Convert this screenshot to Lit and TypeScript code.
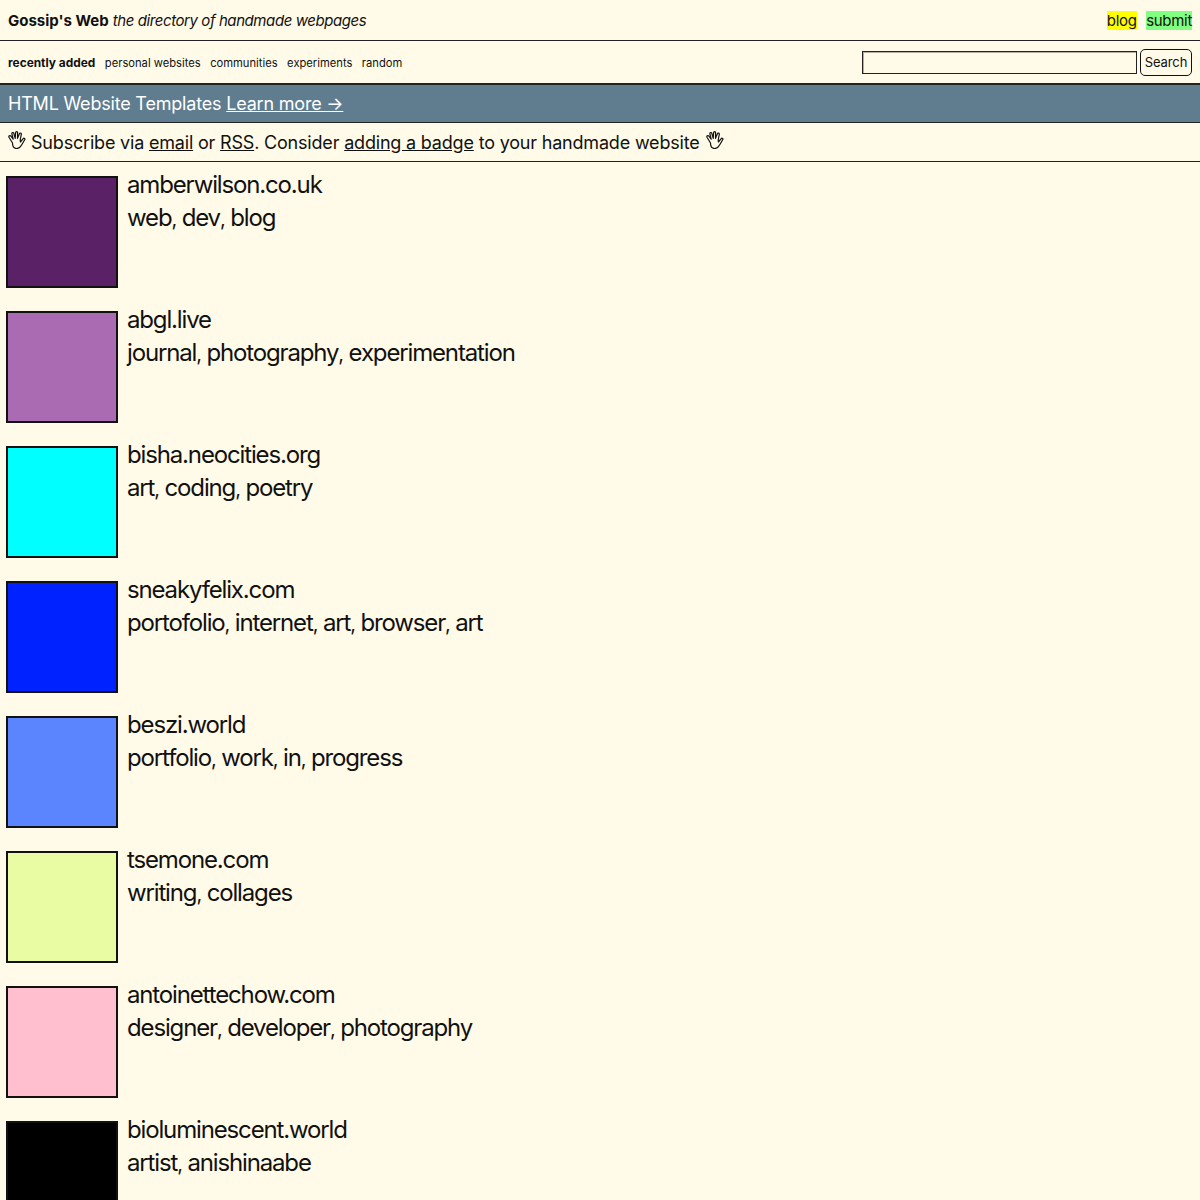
import { LitElement, html, css, svg } from "lit";
import { customElement } from "lit/decorators.js";

const sites = [
  { name: "amberwilson.co.uk", tags: ["web", "dev", "blog"], color: "#5b2166" },
  { name: "abgl.live", tags: ["journal", "photography", "experimentation"], color: "#ab6bb3" },
  { name: "bisha.neocities.org", tags: ["art", "coding", "poetry"], color: "#00ffff" },
  { name: "sneakyfelix.com", tags: ["portofolio", "internet", "art", "browser", "art"], color: "#0022ff" },
  { name: "beszi.world", tags: ["portfolio", "work", "in", "progress"], color: "#5b84ff" },
  { name: "tsemone.com", tags: ["writing", "collages"], color: "#e9fca4" },
  { name: "antoinettechow.com", tags: ["designer", "developer", "photography"], color: "#ffbfcf" },
  { name: "bioluminescent.world", tags: ["artist", "anishinaabe"], color: "#000000" },
];

const hand = svg`<svg class="hand" viewBox="0 0 18 18" width="18" height="18" fill="none" stroke="#111" stroke-width="1.2" stroke-linecap="round" stroke-linejoin="round"><path d="M4.5 12 1 6.2C.4 5 1.9 3.9 2.8 5L5.2 8.2 3.9 2.8C3.6 1.4 5.4 1 5.8 2.3L7.2 7.4 7.6 1.6C7.7.3 9.6.3 9.6 1.6L9.5 7.4 11.4 2.7C11.9 1.5 13.6 2 13.3 3.3L12.2 9 12.4 11 15.2 7.6C16 6.7 17.4 7.7 16.7 8.8L13.6 14C12.6 15.9 11 17.5 8.6 17.5 6 17.5 4.5 15 4.5 12Z"/></svg>`;

@customElement("app-root")
export class AppRoot extends LitElement {
  static styles = css`
    :host {
      display: block;
      height: 1200px;
      overflow: hidden;
      background: #fffbe8;
      color: #111;
      font-family: Inter, "Liberation Sans", sans-serif;
    }
    a { color: inherit; }
    .top {
      display: flex;
      justify-content: space-between;
      align-items: center;
      height: 40px;
      padding: 0 8px;
      font-size: 15px;
      border-bottom: 1px solid #222;
    }
    .top b { font-weight: 700; }
    .top i { letter-spacing: -0.42px; }
    .links { display: flex; gap: 9.5px; letter-spacing: -0.3px; }
    .blog { background: #ffff00; }
    .submit { background: #80ff80; }
    .nav {
      display: flex;
      justify-content: space-between;
      align-items: center;
      height: 42px;
      padding: 0 8px;
      font-size: 11.2px;
      border-bottom: 1px solid #222;
    }
    .tabs { display: flex; align-items: center; gap: 9.5px; padding-top: 1px; }
    .tabs b { font-weight: 700; font-size: 11.9px; line-height: 14px; }
    .search { display: flex; align-items: center; gap: 3px; }
    .search input {
      box-sizing: border-box;
      width: 275px;
      height: 23px;
      padding: 0;
      background: transparent;
      border: 1px solid #222;
      box-shadow: inset 1px 1px 0 rgba(0, 0, 0, 0.3);
      outline: none;
    }
    .search button {
      box-sizing: border-box;
      width: 52px;
      height: 27px;
      padding: 0;
      background: transparent;
      border: 1px solid #111;
      border-radius: 5px;
      color: #111;
      font: 13px Inter, sans-serif;
      letter-spacing: -0.1px;
    }
    .band {
      display: flex;
      align-items: center;
      gap: 5px;
      height: 37px;
      padding: 0 8px;
      background: #5f7d8f;
      color: #fff;
      font-size: 18px;
      letter-spacing: -0.2px;
      border-top: 1px solid #222;
      border-bottom: 1px solid #222;
    }
    .sub {
      display: flex;
      align-items: center;
      gap: 6px;
      height: 38px;
      padding: 0 8px;
      font-size: 18px;
      letter-spacing: -0.19px;
      border-bottom: 1px solid #222;
    }
    .sub span { white-space: pre; }
    .hand { flex: none; margin-top: -4px; }
    .hand:first-child { margin-right: -1px; }
    .list { padding: 14px 6px 0; }
    .item { display: flex; gap: 9px; height: 135px; }
    .swatch {
      box-sizing: border-box;
      flex: none;
      width: 112px;
      height: 112px;
      border: 2px solid #111;
    }
    .text {
      font-size: 24px;
      line-height: 33px;
      margin-top: -8px;
      letter-spacing: -1.15px;
    }
    .comma { font-size: 20px; }
  `;

  render() {
    return html`
      <div class="top">
        <div><b>Gossip's Web</b> <i>the directory of handmade webpages</i></div>
        <div class="links"><span class="blog">blog</span><span class="submit">submit</span></div>
      </div>
      <div class="nav">
        <div class="tabs">
          <b>recently added</b><span>personal websites</span><span>communities</span><span>experiments</span><span>random</span>
        </div>
        <form class="search"><input type="text" /><button type="button">Search</button></form>
      </div>
      <div class="band"><span>HTML Website Templates</span><a href="#">Learn more →</a></div>
      <div class="sub">
        ${hand}
        <span>Subscribe via <a href="#">email</a> or <a href="#">RSS</a>. Consider <a href="#">adding a badge</a> to your handmade website</span>
        ${hand}
      </div>
      <div class="list">
        ${sites.map(
          (s) => html`
            <div class="item">
              <div class="swatch" style="background:${s.color}"></div>
              <div class="text">
                <div>${s.name}</div>
                <div>${s.tags.map((t, i) => (i < s.tags.length - 1 ? html`${t}<span class="comma">,</span> ` : t))}</div>
              </div>
            </div>
          `
        )}
      </div>
    `;
  }
}
